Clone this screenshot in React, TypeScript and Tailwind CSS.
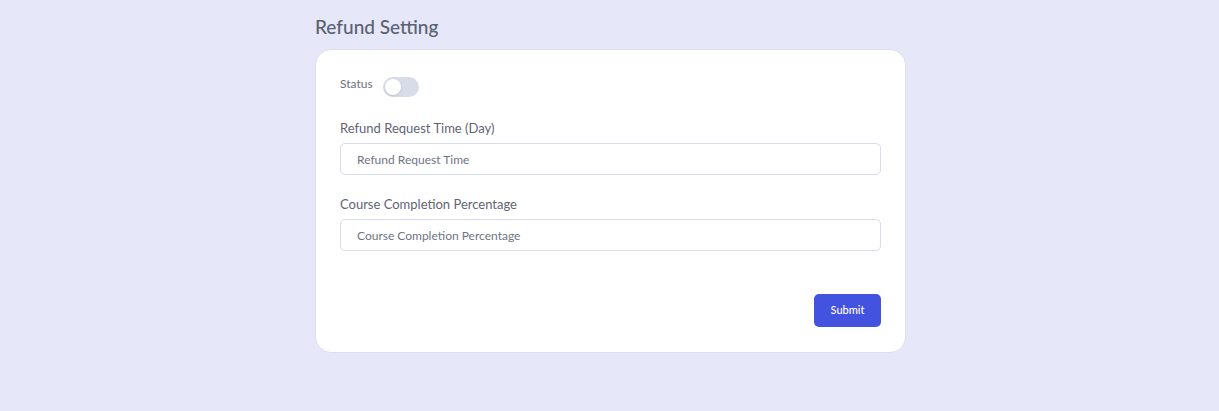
import { useState } from 'react'

export default function App() {
  const [status, setStatus] = useState(false)

  return (
    <div className="min-h-[411px] w-full bg-[#e6e7f8] font-['Lato','Noto_Sans',sans-serif]">
      <div className="mx-auto w-[593px] pl-[2px] pt-[14px]">
        <h1 className="text-[19px] leading-[26px] text-[#5a6170] font-medium">Refund Setting</h1>

        <div className="mt-[9px] h-[304px] rounded-[16px] border border-[#dcdff0] bg-white px-6 pt-[25px] flex flex-col">
          {/* Status */}
          <div className="flex items-center gap-[10px]">
            <span className="pb-[5px] text-[12px] text-[#6b7080]">Status</span>
            <button
              onClick={() => setStatus(!status)}
              className={`relative h-5 w-9 rounded-full ${status ? 'bg-[#4353e0]' : 'bg-[#d8dce8]'}`}
            >
              <span
                className={`absolute top-[2px] h-4 w-4 rounded-full bg-white shadow-sm ${status ? 'left-[18px]' : 'left-[2px]'}`}
              />
            </button>
          </div>

          {/* Refund request time */}
          <label className="mt-[21px] block text-[13px] leading-[18px] text-[#5f6474]">Refund Request Time (Day)</label>
          <input
            placeholder="Refund Request Time"
            className="mt-[6px] h-8 w-full rounded-[5px] border border-[#d9dcec] px-4 text-[12px] text-[#5f6474] placeholder:text-[#6f7483] outline-none"
          />

          {/* Completion */}
          <label className="mt-[20px] block text-[13px] leading-[18px] text-[#5f6474]">Course Completion Percentage</label>
          <input
            placeholder="Course Completion Percentage"
            className="mt-[6px] h-8 w-full rounded-[5px] border border-[#d9dcec] px-4 text-[12px] text-[#5f6474] placeholder:text-[#6f7483] outline-none"
          />

          <div className="mt-[43px] flex justify-end">
            <button className="h-[33px] w-[67px] rounded-[5px] bg-[#4353e0] text-[11px] font-medium text-white">Submit</button>
          </div>
        </div>
      </div>
    </div>
  )
}
